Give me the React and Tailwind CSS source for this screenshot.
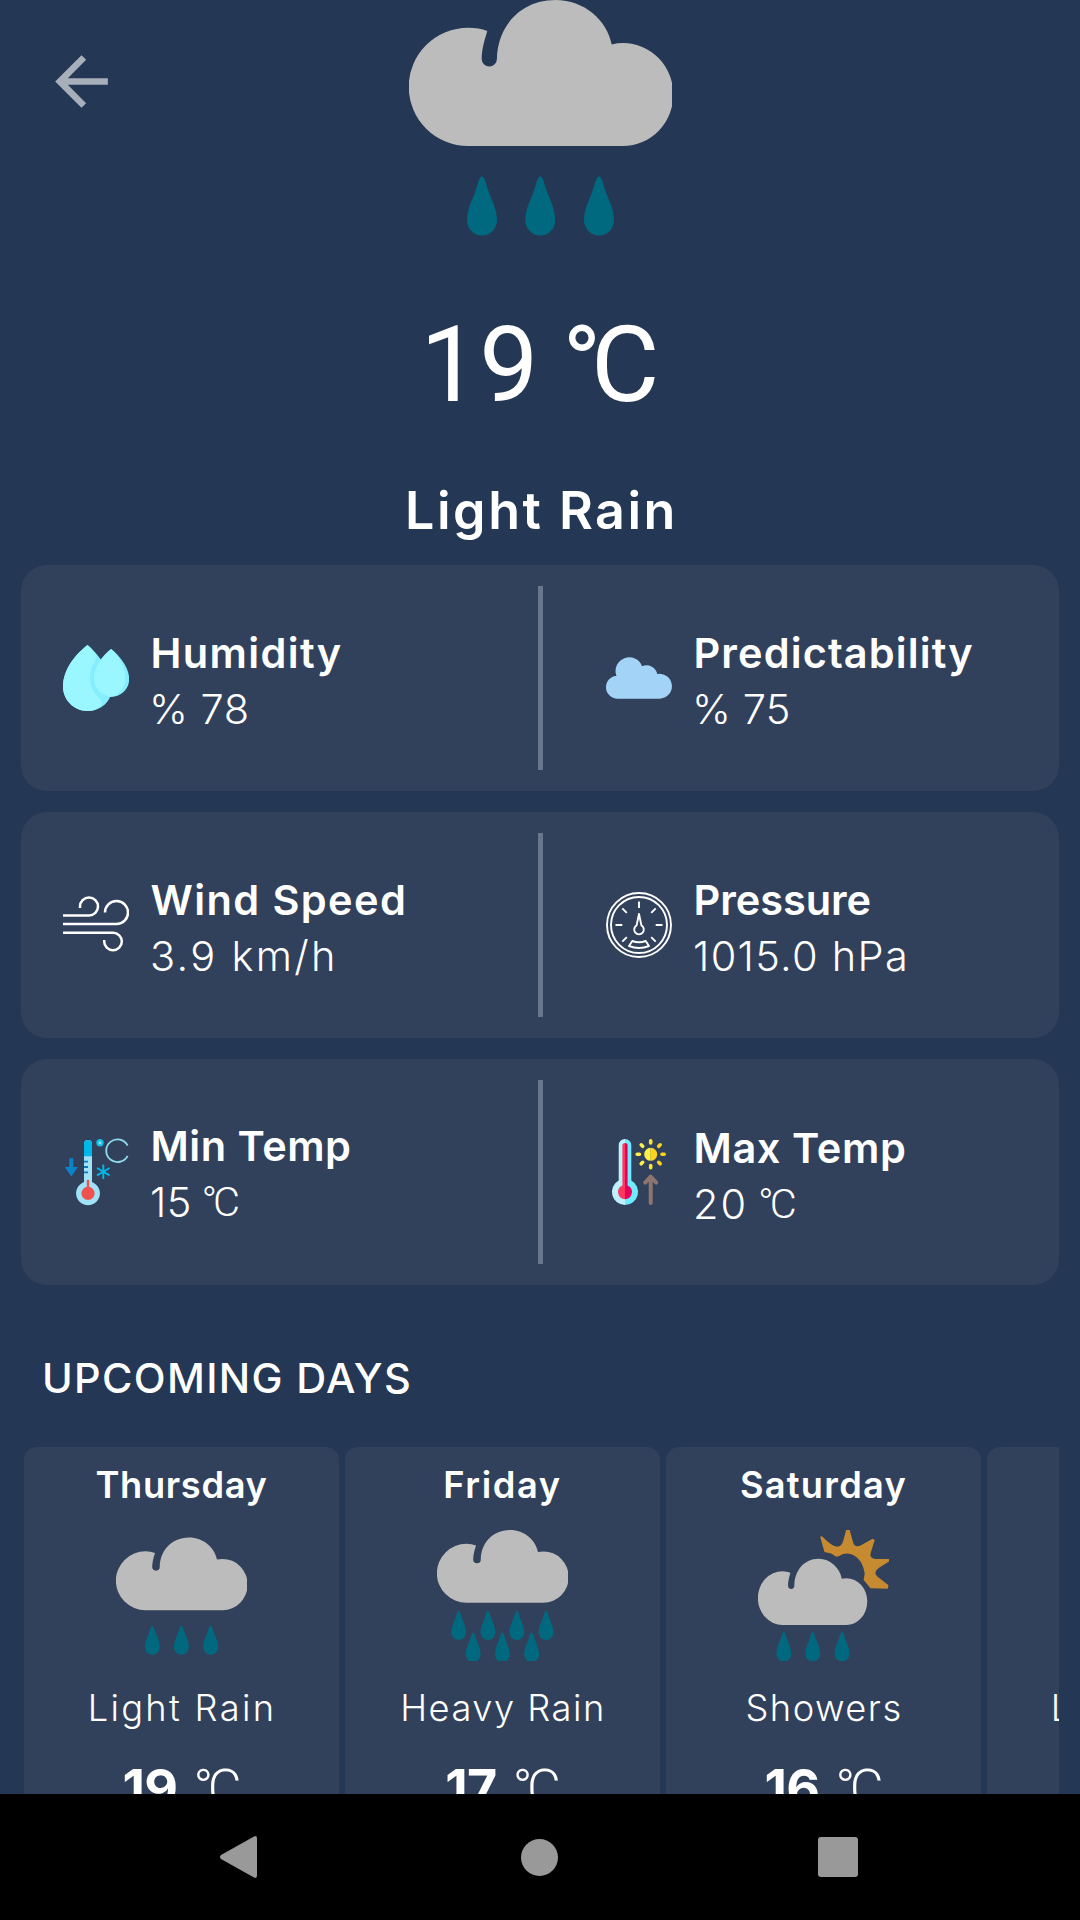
import React from "react";

const CLOUD =
  "M59.3 27.7 Q70 27.7 78.3 31 C75 42 72.7 50 72.7 59 A7.6 7.6 0 0 0 87.9 59 C88.3 28 110 0 146.7 0 C175 0 198 20 202.7 44.4 Q208 43 214 43 A50.3 51.5 0 0 1 214 146 H59.3 A59.6 59.15 0 0 1 59.3 27.7 Z";

function Drop({ x, y }) {
  return (
    <path
      transform={`translate(${x} ${y})`}
      d="M0 0 C3 0 4 8 7 16 C11 26 15 34 15 43.5 A15 15.5 0 0 1 -15 43.5 C-15 34 -11 26 -7 16 C-4 8 -3 0 0 0 Z"
      fill="#00697f"
    />
  );
}

const DROPS = {
  light: [[73, 176.5], [131.3, 176.5], [190, 176.5]],
  heavy: [[43.5, 162], [102.3, 162], [160.4, 162], [219, 162], [72.6, 206], [131.3, 206], [190, 206]],
  showers: [[51.7, 205], [109.9, 205], [168.7, 205]],
};

function WeatherIcon({ kind, className }) {
  const cloudTransform = {
    light: undefined,
    heavy: undefined,
    showers: "translate(0 57.5) scale(0.83 0.912)",
  }[kind];
  return (
    <svg viewBox={kind === "light" ? "0 -15 263 263" : "0 0 263 263"} className={className}>
      {kind === "showers" && (
        <path
          d="M125 14 Q128 11 131 15 Q148 32 157 33 Q168 34 171 22 L177 0 H184 L191 25 Q194 36 206 31 L230 17.4 L234.4 20 L227 43 Q222 57 236 58 L263 58 V63 L243 76 Q230 86 239 93 L262 111 L260.5 117.8 L226 117 L212 100.4 L214.3 87 Q210 60 193 51 Q178 43 163 52 L157 53.5 L147 47 L133.4 44 Z"
          fill="#c68a31"
        />
      )}
      <path d={CLOUD} transform={cloudTransform} fill="#bcbcbc" />
      {DROPS[kind].map(([x, y]) => (
        <Drop key={`${x}-${y}`} x={x} y={y} />
      ))}
    </svg>
  );
}

function HumidityIcon() {
  return (
    <svg viewBox="0 0 66 66" className="size-[66px]">
      <path d="M24.5 0 C32 6 49 25 49 43 C49 56 38 66 24.5 66 C11 66 0 55 0 41.5 C0 24 13 9 24.5 0 Z" fill="#84eeff" />
      <path d="M24.5 0 C28 3 31 6 33 10 C35 15 27 20 27 33 C27 43 32 49 37 54 C40 57 39 60 35 63 C31 66 27 66 24.5 66 C11 66 0 55 0 41.5 C0 24 13 9 24.5 0 Z" fill="#9af7ff" />
      <path d="M38.6 13.5 Q52 30 48 52 Q38 50 31 40 Q28 24 38.6 13.5 Z" fill="#84eeff" />
      <path d="M48.2 4 C57 11 66.2 23 66.2 34 C66.2 44 58 51.7 48.2 51.7 C38.6 51.7 31 43 31 33.5 C31 22 39 11 48.2 4 Z" fill="#84eeff" />
      <path d="M48.2 4 C55 10 62.3 22 62.3 33 C62.3 43 57 48 50 51.6 C39 52.5 31 43 31 33.5 C31 22 39 11 48.2 4 Z" fill="#9af7ff" />
    </svg>
  );
}

function CloudIcon() {
  return (
    <svg viewBox="0 -12 66 66" className="size-[66px]" fill="#a3d3f7">
      <path d="M11.5 18.7 H10.4 A13.2 13.2 0 1 1 36 9.2 A11 11 0 0 1 51.2 16.9 A12.5 12.5 0 1 1 53.5 41.7 H11.5 A11.5 11.5 0 0 1 11.5 18.7 Z" />
    </svg>
  );
}

function WindIcon() {
  return (
    <svg viewBox="1 0 66 66" className="size-[66px]" fill="none" stroke="#fff" strokeWidth="2.5">
      <path d="M1 23.5 H27 A9 9 0 1 0 18 14.5 V16" />
      <path d="M1 32 H54.5 A11.5 11.5 0 1 0 43 20.5" />
      <path d="M1 40.7 H51 A8.8 8.8 0 1 1 42.2 49.5 V48" />
    </svg>
  );
}

function GaugeIcon() {
  return (
    <svg viewBox="0 0 66 66" className="size-[66px]" fill="none" stroke="#fff" strokeWidth="1.9">
      <circle cx="33" cy="33" r="32" />
      <circle cx="33" cy="33" r="28" />
      <path d="M33 9.5 V16 M9.5 33 H16.3 M49.7 33 H56.5 M16.3 16.3 L20.8 20.8 M49.7 16.3 L45.2 20.8 M16.3 49.7 L20.8 45.2 M49.7 49.7 L45.2 45.2" />
      <path d="M33 22 L30.6 33.4 A4.8 4.8 0 1 0 35.4 33.4 Z" strokeLinejoin="round" />
      <path d="M26.3 49 Q33 51.5 39.7 49 L43 54 Q33 58 23 54 Z" strokeLinejoin="round" />
    </svg>
  );
}

function MinTempIcon() {
  return (
    <svg viewBox="1 0 66 70" className="h-[70px] w-[66px]" fill="none">
      <rect x="22" y="3" width="8" height="50" rx="4" fill="#a0e3f7" />
      <path d="M22 19.3 V7 A4 4 0 0 1 30 7 V19.3 Z" fill="#00b8e8" />
      <circle cx="26" cy="56.3" r="11.9" fill="#a0e3f7" />
      <circle cx="26" cy="56.3" r="6.6" fill="#ee5350" />
      <path d="M26 43 V52" stroke="#ee5350" strokeWidth="2.4" />
      <path d="M22 24.7 H26 M22 30 H26 M22 35.3 H26" stroke="#0a7bbf" strokeWidth="1.8" />
      <path d="M7.3 21.3 H11.3 V30 H15.8 L9.3 39.4 L2.8 30 H7.3 Z" fill="#0a83c9" />
      <circle cx="38" cy="5.7" r="3.7" fill="#10bfea" />
      <circle cx="38" cy="5.7" r="1.5" fill="#8fe3f6" />
      <path d="M65.6 8.6 A11.3 11.3 0 1 0 65.6 18.8" stroke="#8fdaee" strokeWidth="1.8" />
      <path d="M41.3 27.5 V42 M35 31 L47.6 38.4 M35 38.4 L47.6 31" stroke="#00b8e8" strokeWidth="1.9" />
    </svg>
  );
}

function MaxTempIcon() {
  return (
    <svg viewBox="0 0 66 70" className="h-[70px] w-[66px]" fill="none">
      <path d="M19 2 A6.3 6.3 0 0 0 12.7 8.3 V43.6 A13 13 0 0 0 19 68 Z" fill="#bdf2fc" />
      <path d="M19 2 A6.3 6.3 0 0 1 25.3 8.3 V43.6 A13 13 0 0 1 19 68 Z" fill="#6feaff" />
      <path d="M19 6 A2.6 2.6 0 0 0 16.4 8.6 V48.4 A7.2 7.2 0 0 0 19 62.2 Z" fill="#ff3860" />
      <path d="M19 6 A2.6 2.6 0 0 1 21.6 8.6 V48.4 A7.2 7.2 0 0 1 19 62.2 Z" fill="#e6005c" />
      <path d="M44.7 10.8 A6.5 6.5 0 0 0 44.7 23.8 Z" fill="#fdf04a" />
      <path d="M44.7 10.8 A6.5 6.5 0 0 1 44.7 23.8 Z" fill="#fdd41b" />
      <g stroke="#fde42f" strokeWidth="3.6" strokeLinecap="round">
        <path d="M44.7 3.8 V6 M44.7 28.6 V30.8" />
        <path d="M31.2 17.3 H33.4 M35.2 7.8 L36.7 9.3 M35.2 26.8 L36.7 25.3" stroke="#fdf04a" />
        <path d="M58.2 17.3 H56 M54.2 7.8 L52.7 9.3 M54.2 26.8 L52.7 25.3" stroke="#fdd41b" />
      </g>
      <path d="M44.7 40 V66 M39.2 45.6 L44.7 39.6 L50.2 45.6" stroke="#8d766f" strokeWidth="4" strokeLinecap="round" strokeLinejoin="round" />
    </svg>
  );
}

function Degree({ className }) {
  return <span className={`font-['Roboto',sans-serif] tracking-[-0.1em] ${className}`}>°C</span>;
}

function Metric({ icon, label, labelClass, value, valueClass, degree, shift, className }) {
  return (
    <div className={`flex items-center gap-[21px] ${className}`}>
      {icon}
      <div className={`text-[41.5px] leading-[56px] whitespace-nowrap ${shift}`}>
        <div className={`pl-[0.5px] font-semibold ${labelClass}`}>{label}</div>
        <div className="flex font-[350]">
          <span className={valueClass}>{value}</span>
          {degree && <Degree className="ml-[10px] font-light" />}
        </div>
      </div>
    </div>
  );
}

function MetricCard({ left, right }) {
  return (
    <section className="flex h-[226px] items-center rounded-[26px] bg-[#32415b]">
      <Metric {...left} className="w-[517px] pl-[42px]" />
      <div className="h-[184px] w-[5px] shrink-0 bg-[#6a768c]" />
      <Metric {...right} className="flex-1 pl-[63px]" />
    </section>
  );
}

const METRICS = [
  {
    left: { icon: <HumidityIcon />, label: "Humidity", labelClass: "tracking-[1.35px]", value: "% 78", valueClass: "-ml-px tracking-[0.5px]", shift: "pt-[5px]" },
    right: { icon: <CloudIcon />, label: "Predictability", labelClass: "tracking-[1.1px]", value: "% 75", valueClass: "-ml-px tracking-[0.1px]", shift: "pt-[5px]" },
  },
  {
    left: { icon: <WindIcon />, label: "Wind Speed", labelClass: "tracking-[1.4px]", value: "3.9 km/h", valueClass: "tracking-[2.3px]", shift: "pt-[5px]" },
    right: { icon: <GaugeIcon />, label: "Pressure", labelClass: "tracking-[-0.06px]", value: "1015.0 hPa", valueClass: "tracking-[1.3px]", shift: "pt-[5px]" },
  },
  {
    left: { icon: <MinTempIcon />, label: "Min Temp", labelClass: "tracking-[0.5px]", value: "15", valueClass: "tracking-[0.3px]", degree: true, shift: "pt-[3px]" },
    right: { icon: <MaxTempIcon />, label: "Max Temp", labelClass: "tracking-[0.6px]", value: "20", valueClass: "tracking-[2px]", degree: true, shift: "pt-[7px]" },
  },
];

const DAYS = [
  { day: "Thursday", dayClass: "tracking-[0.65px]", kind: "light", label: "Light Rain", labelClass: "tracking-[2.3px]", temp: "19" },
  { day: "Friday", dayClass: "tracking-[1.63px]", kind: "heavy", label: "Heavy Rain", labelClass: "tracking-[1.5px]", temp: "17" },
  { day: "Saturday", dayClass: "tracking-[1.25px]", kind: "showers", label: "Showers", labelClass: "tracking-[1.5px]", temp: "16" },
  { day: "Sunday", dayClass: "tracking-[1.2px]", kind: "light", label: "Light Rain", labelClass: "tracking-[2.3px]", temp: "17" },
];

function DayCard({ day, dayClass, kind, label, labelClass, temp }) {
  return (
    <article className="flex h-[400px] w-[315px] shrink-0 flex-col items-center rounded-[13px] bg-[#32415b] pt-4 whitespace-nowrap">
      <h3 className={`text-[36.25px] leading-[44px] font-semibold ${dayClass}`}>{day}</h3>
      <WeatherIcon kind={kind} className="mt-[23px] size-[131px] shrink-0" />
      <p className={`mt-[25px] pl-px text-[36.25px] leading-[44px] font-[350] ${labelClass}`}>{label}</p>
      <div className="mt-[27px] flex text-[52px] leading-[63px]">
        <span className="font-bold tracking-[-0.7px]">{temp}</span>
        <Degree className="ml-[16px] w-[47px] font-light" />
      </div>
    </article>
  );
}

export default function App() {
  return (
    <div className="flex h-[1920px] w-[1080px] flex-col overflow-hidden bg-[#243754] font-['Inter',sans-serif] text-white">
      <main className="relative flex h-[1794px] shrink-0 flex-col overflow-hidden px-[21px]">
        <button className="absolute top-[42px] left-[42px]" aria-label="Back">
          <svg viewBox="0 0 24 24" className="size-[79px]" fill="#a7afbb">
            <path d="M20 11H7.83l5.59-5.59L12 4l-8 8 8 8 1.41-1.41L7.83 13H20v-2z" />
          </svg>
        </button>
        <div className="flex h-[248px] shrink-0 items-end justify-center">
          <WeatherIcon kind="light" className="size-[263px] shrink-0 blur-[0.7px]" />
        </div>
        <div className="mt-[56px] flex justify-center pr-[11px] font-['Roboto',sans-serif] text-[105px] leading-[123px]">
          <span>19</span>
          <Degree className="ml-[24px]" />
        </div>
        <h1 className="mt-[52px] pl-[3px] text-center text-[52px] leading-[63px] font-semibold tracking-[2.5px]">Light Rain</h1>
        <div className="mt-[23px] flex flex-col gap-[21px]">
          {METRICS.map((m) => (
            <MetricCard key={m.left.label} {...m} />
          ))}
        </div>
        <h2 className="mt-[68px] pl-[21px] text-[41.5px] leading-[50px] font-medium tracking-[1.34px]">UPCOMING DAYS</h2>
        <div className="mt-[44px] flex gap-[6px] overflow-hidden pl-[3px]">
          {DAYS.map((d) => (
            <DayCard key={d.day} {...d} />
          ))}
        </div>
      </main>
      <nav className="flex h-[126px] shrink-0 items-center bg-black">
        <svg viewBox="0 0 37 42" className="ml-[220px] h-[42px] w-[37px]" fill="#999">
          <path d="M34 0.5 Q37 -1 37 2.5 V39.5 Q37 43 34 41.5 L1 23 Q-1 21 1 19 Z" />
        </svg>
        <div className="ml-[264px] size-[37px] rounded-full bg-[#999]" />
        <div className="ml-[260px] size-[40px] rounded-[3px] bg-[#999]" />
      </nav>
    </div>
  );
}
